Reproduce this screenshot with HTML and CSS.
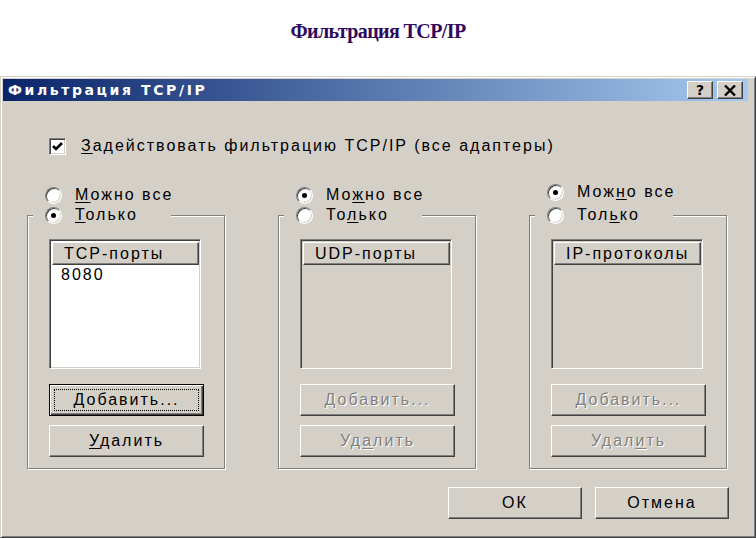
FILE: index.html
```html
<!DOCTYPE html>
<html>
<head>
    <title>Фильтрация TCP/IP</title>
    <link rel="stylesheet" href="styles.css">
</head>
<body>
    <div class="heading">Фильтрация TCP/IP</div>

    <div class="dialog">
        <div class="titlebar">
            <span class="title">Фильтрация TCP/IP</span>
            <div class="caption-buttons">
                <span class="cap-btn help">?</span>
                <span class="cap-btn close">
                    <svg width="12" height="11" viewBox="0 0 12 11">
                        <path d="M1 0.5 L11 10.5 M11 0.5 L1 10.5" stroke="#000" stroke-width="2.4"/>
                    </svg>
                </span>
            </div>
        </div>

        <div class="dialog-body">
            <div class="check-row">
                <span class="checkbox">
                    <svg width="13" height="13" viewBox="0 0 13 13">
                        <path d="M2 6 L5 9 L11 3" fill="none" stroke="#000" stroke-width="2.6"/>
                    </svg>
                </span>
                <span><u>З</u>адействовать фильтрацию TCP/IP (все адаптеры)</span>
            </div>

            <div class="columns">
                <!-- TCP -->
                <div class="column">
                    <div class="radio-row">
                        <span class="radio"></span>
                        <span><u>М</u>ожно все</span>
                    </div>
                    <fieldset class="group">
                        <legend class="radio-row">
                            <span class="radio checked"></span>
                            <span><u>Т</u>олько</span>
                        </legend>
                        <div class="listbox">
                            <div class="list-header">TCP-порты</div>
                            <div class="list-item">8080</div>
                        </div>
                        <div class="btn add default"><span class="focus">Добавить...</span></div>
                        <div class="btn"><span><u>У</u>далить</span></div>
                    </fieldset>
                </div>

                <!-- UDP -->
                <div class="column">
                    <div class="radio-row">
                        <span class="radio checked"></span>
                        <span>Мо<u>ж</u>но все</span>
                    </div>
                    <fieldset class="group">
                        <legend class="radio-row">
                            <span class="radio"></span>
                            <span>То<u>л</u>ько</span>
                        </legend>
                        <div class="listbox disabled">
                            <div class="list-header">UDP-порты</div>
                        </div>
                        <div class="btn add disabled"><span>Добавить...</span></div>
                        <div class="btn disabled"><span>Уд<u>а</u>лить</span></div>
                    </fieldset>
                </div>

                <!-- IP -->
                <div class="column">
                    <div class="radio-row raised-row">
                        <span class="radio checked"></span>
                        <span>Мож<u>н</u>о все</span>
                    </div>
                    <fieldset class="group">
                        <legend class="radio-row">
                            <span class="radio"></span>
                            <span>Тол<u>ь</u>ко</span>
                        </legend>
                        <div class="listbox disabled">
                            <div class="list-header">IP-протоколы</div>
                        </div>
                        <div class="btn add disabled"><span>Добавить...</span></div>
                        <div class="btn disabled"><span>Удал<u>и</u>ть</span></div>
                    </fieldset>
                </div>
            </div>

            <div class="footer">
                <div class="btn wide"><span>ОК</span></div>
                <div class="btn wide"><span>Отмена</span></div>
            </div>
        </div>
    </div>
</body>
</html>
```

FILE: styles.css
```css
body {
    margin: 0;
    padding: 0;
    background-color: #ffffff;
    font-family: "Liberation Sans", Arial, sans-serif;
}

.heading {
    height: 76px;
    box-sizing: border-box;
    padding-top: 20px;
    text-align: center;
    font-family: "Liberation Serif", "Times New Roman", serif;
    font-weight: bold;
    font-size: 20px;
    letter-spacing: -0.6px;
    color: #2e0a5e;
}

/* Dialog frame */
.dialog {
    width: 756px;
    height: 462px;
    box-sizing: border-box;
    background-color: #d4d0c8;
    border: 1px solid;
    border-color: #d4d0c8 #404040 #404040 #d4d0c8;
    box-shadow: inset 1px 1px 0 #ffffff, inset -1px -1px 0 #808080;
    padding: 2px 3px 3px 2px;
    display: flex;
    flex-direction: column;
}

.titlebar {
    height: 22px;
    margin-right: 4px;
    display: flex;
    align-items: center;
    justify-content: space-between;
    background: linear-gradient(to right, #0a246a, #a6caf0);
    padding-left: 5px;
    padding-right: 5px;
}
.title {
    font-family: "DejaVu Sans", sans-serif;
    font-weight: bold;
    font-size: 14px;
    letter-spacing: 2.6px;
    color: #ffffff;
}
.caption-buttons {
    display: flex;
    gap: 4px;
}
.cap-btn {
    width: 26px;
    height: 18px;
    box-sizing: border-box;
    background-color: #d4d0c8;
    border: 1px solid;
    border-color: #ffffff #404040 #404040 #ffffff;
    box-shadow: inset -1px -1px 0 #808080;
    display: flex;
    align-items: center;
    justify-content: center;
}
.cap-btn.help {
    font-family: "DejaVu Sans", sans-serif;
    font-weight: bold;
    font-size: 14px;
    color: #000;
    line-height: 1;
}

/* Body */
.dialog-body {
    flex: 1;
    padding-top: 36px;
    font-size: 16px;
    letter-spacing: 2px;
    color: #000;
}
u {
    text-decoration-thickness: 1px;
    text-underline-offset: 2px;
}

.check-row {
    display: flex;
    align-items: center;
    gap: 15px;
    padding-left: 46px;
    height: 18px;
}
.checkbox {
    width: 17px;
    height: 17px;
    box-sizing: border-box;
    background-color: #ffffff;
    border: 1px solid;
    border-color: #808080 #ffffff #ffffff #808080;
    box-shadow: inset 1px 1px 0 #404040, inset -1px -1px 0 #d4d0c8;
    display: flex;
    align-items: center;
    justify-content: center;
}

.columns {
    display: flex;
    align-items: flex-end;
    gap: 53px;
    padding-left: 24px;
    margin-top: 27px;
}
.column {
    width: 198px;
}

.radio-row {
    display: flex;
    align-items: center;
    gap: 13px;
    height: 20px;
    padding-left: 18px;
}
.raised-row {
    margin-bottom: 3px;
}
.radio {
    width: 17px;
    height: 17px;
    box-sizing: border-box;
    border-radius: 50%;
    background-color: #ffffff;
    border: 1px solid;
    border-color: #808080 #ffffff #ffffff #808080;
    box-shadow: inset 1px 1px 0 #404040, inset -1px -1px 0 #d4d0c8;
    position: relative;
}
.radio.checked::after {
    content: "";
    position: absolute;
    left: 5px;
    top: 5px;
    width: 5px;
    height: 5px;
    border-radius: 50%;
    background-color: #000;
}

/* Group box */
.group {
    margin: 0;
    padding: 14px 0 11px 21px;
    border: 1px solid #808080;
    box-shadow: inset 1px 1px 0 #ffffff, 1px 1px 0 #ffffff;
    width: 198px;
    box-sizing: border-box;
}
.group legend.radio-row {
    width: 138px;
    box-sizing: border-box;
    padding-left: 12px;
    margin-left: -16px;
    background-color: #d4d0c8;
}

.listbox {
    width: 152px;
    height: 130px;
    box-sizing: border-box;
    background-color: #ffffff;
    border: 1px solid;
    border-color: #808080 #ffffff #ffffff #808080;
    box-shadow: inset 1px 1px 0 #404040, inset -1px -1px 0 #d4d0c8;
    padding: 2px 1px 1px 2px;
}
.listbox.disabled {
    background-color: #d4d0c8;
}
.list-header {
    height: 23px;
    box-sizing: border-box;
    background-color: #d4d0c8;
    border: 1px solid;
    border-color: #ffffff #404040 #404040 #ffffff;
    box-shadow: inset -1px -1px 0 #808080;
    padding-left: 11px;
    line-height: 21px;
}
.list-item {
    padding-left: 9px;
    line-height: 19px;
}

/* Buttons */
.btn {
    width: 155px;
    height: 32px;
    box-sizing: border-box;
    background-color: #d4d0c8;
    border: 1px solid;
    border-color: #ffffff #404040 #404040 #ffffff;
    box-shadow: inset -1px -1px 0 #808080, inset 1px 1px 0 #d4d0c8;
    display: flex;
    align-items: center;
    justify-content: center;
    margin-top: 9px;
}
.btn.add {
    margin-top: 15px;
}
.btn.default {
    border: 1px solid #000;
    box-shadow: inset 1px 1px 0 #ffffff, inset -1px -1px 0 #404040, inset -2px -2px 0 #808080;
    padding: 4px;
}
.btn .focus {
    flex: 1;
    align-self: stretch;
    display: flex;
    align-items: center;
    justify-content: center;
    border: 1px dotted #000;
}
.btn.disabled {
    color: #808080;
    text-shadow: 1px 1px 0 #ffffff;
}

.footer {
    display: flex;
    justify-content: flex-end;
    gap: 13px;
    padding-right: 23px;
    margin-top: 18px;
}
.btn.wide {
    width: 134px;
    margin-top: 0;
}
```
